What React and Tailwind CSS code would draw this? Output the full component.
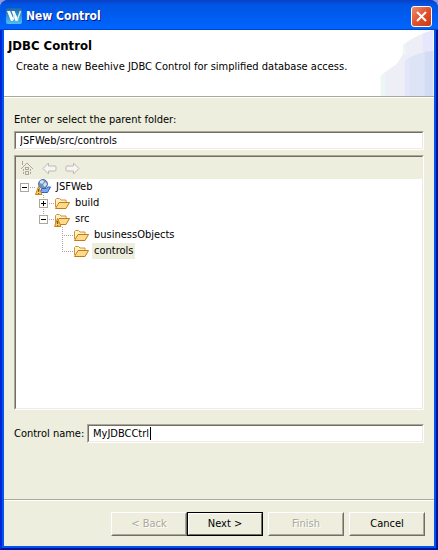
const sunken = "border border-t-[#aca899] border-l-[#aca899] border-r-white border-b-white";
const sunkenInner = "border border-t-[#716f64] border-l-[#716f64] border-r-[#f1e9e2] border-b-[#f1e9e2]";

const tree = {
	name: "JSFWeb",
	icon: "project",
	toggle: "minus",
	children: [
		{ name: "build", icon: "folder", toggle: "plus" },
		{
			name: "src",
			icon: "source",
			toggle: "minus",
			children: [
				{ name: "businessObjects", icon: "folder" },
				{ name: "controls", icon: "folder", selected: true },
			],
		},
	],
};

const Logo = () => (
	<svg width="16" height="16" viewBox="0 0 16 16" aria-hidden="true">
		<defs>
			<linearGradient id="logo" x1="0" y1="0" x2="0" y2="1">
				<stop offset="0" stopColor="#1a68ad" />
				<stop offset="1" stopColor="#4fc0ee" />
			</linearGradient>
		</defs>
		<rect width="16" height="16" rx="2" fill="url(#logo)" />
		<path d="M1 3h3l3 7v3H5zM5.500 3h3l3 7v3H9.500z" fill="#fff" />
		<path d="M7 12L9 6M11 13l3.500-10" stroke="#d5ecf8" strokeWidth="1.500" />
	</svg>
);

const HeaderArt = () => (
	<svg width="54" height="67" viewBox="0 0 54 67" className="shrink-0 border-b border-[#aca899]" aria-hidden="true">
		<defs>
			<clipPath id="outer">
				<path d="M0 67V47Q9 39 16 35Q21 28 23 24V15Q36 5 54 0V67z" />
			</clipPath>
			<clipPath id="inner">
				<path d="M25 67V31Q38 22 54 21V67z" />
			</clipPath>
		</defs>
		<g clipPath="url(#outer)">
			<path d="M0 0h54v67H0z" fill="#eeeef7" />
			<path d="M0 40h5v27H0zM23 10h3v15h-3z" fill="#ecf6f4" />
			<path d="M43 0h11v67H43z" fill="#e6e6fd" />
		</g>
		<g clipPath="url(#inner)">
			<path d="M25 0h29v67H25z" fill="#dce4f5" />
			<path d="M25 0h5v67h-5z" fill="#e4e4fa" />
			<path d="M45 0h9v67h-9z" fill="#d2dcf5" />
		</g>
	</svg>
);

const HomeIcon = () => (
	<svg width="14" height="16" viewBox="0 0 14 16" shapeRendering="crispEdges" aria-hidden="true">
		<path
			d="M2 1h1v4H2zM6 3h2v1H6zM5 4h1v1H5zM8 4h1v1H8zM4 5h1v1H4zM9 5h1v1H9zM3 6h1v1H3zM10 6h1v1h-1zM2 7h1v1H2zM11 7h1v1h-1zM1 8h1v1H1zM12 8h1v1h-1zM3 9h1v2H3zM10 9h1v2h-1zM3 12h1v2H3zM10 12h1v2h-1zM5 7h4v3H5zM5 11h4v4H5z"
			fill="#aca899"
		/>
		<path d="M6 8h2v1H6zM6 12h2v2H6z" fill="#edeedd" />
	</svg>
);

const BackArrow = ({ className }) => (
	<svg width="15" height="13" viewBox="0 0 15 13" className={className} aria-hidden="true">
		<path d="M1 6.500L6.500 1v3H13a1 1 0 0 1 1 1v3a1 1 0 0 1-1 1H6.500v3z" fill="#f6f5f2" stroke="#bdb9b4" strokeLinejoin="round" />
	</svg>
);

const Warning = () => (
	<g>
		<path d="M3.500 7.500L7 15.500H.5z" fill="#f9cf62" stroke="#c98220" strokeLinejoin="round" />
		<path d="M3.700 10v3M3.700 14v1" stroke="#6b4410" />
	</g>
);

const TreeIcon = ({ type }) => (
	<svg width="16" height="16" viewBox="0 0 16 16" className="shrink-0" aria-hidden="true">
		{type === "project" ? (
			<g>
				<circle cx="8" cy="5" r="4.500" fill="#6f93bd" stroke="#55779d" />
				<path d="M5 2l3-1 1 2-2 2-2-1zM10 3l2 2-2 3-2-2z" fill="#d3e3ee" />
				<path d="M5 13.500l2-4h4l2-1.500h2.500l-3 5.500z" fill="#79aaf3" stroke="#2f5fc4" strokeLinejoin="round" />
			</g>
		) : (
			<g>
				<path d="M1.500 12V4.500l1-1h3l1.500 1.500h5v3" fill="#fff3c4" stroke="#d0913a" />
				<path d="M1.500 13.500L5 7.500h10.500l-3.500 6z" fill="#fcdc8c" stroke="#c47a18" strokeLinejoin="round" />
			</g>
		)}
		{type !== "folder" && <Warning />}
	</svg>
);

// Dotted guide lines of one row, with the expand box on top
const Branch = ({ toggle, root, last }) => (
	<svg width="15" height="16" viewBox="0 0 15 16" className="shrink-0" shapeRendering="crispEdges" aria-hidden="true">
		<g stroke="#aca899" strokeDasharray="1 1">
			{!root && <path d={last ? "M4.500 0v8" : "M4.500 0v16"} />}
			<path d="M4 8.500h11" />
		</g>
		{toggle && (
			<g>
				<path d="M.5 4.500h8v8h-8z" fill="#fff" stroke="#aca899" />
				<path d={toggle === "plus" ? "M2 8.500h5M4.500 6v5" : "M2 8.500h5"} stroke="#000" />
			</g>
		)}
	</svg>
);

const TreeNode = ({ node, root, last }) => (
	<li>
		<div className="flex h-4 items-center">
			<Branch toggle={node.toggle} root={root} last={last} />
			<TreeIcon type={node.icon} />
			<span className={`ml-[3px] px-[2px] ${node.selected ? "bg-[#edeedd]" : ""}`}>{node.name}</span>
		</div>
		{node.children && (
			<ul className="pl-[19px]">
				{node.children.map((child, i) => (
					<TreeNode key={child.name} node={child} last={i === node.children.length - 1} />
				))}
			</ul>
		)}
	</li>
);

const DialogButton = ({ children, disabled, primary }) => (
	<button
		type="button"
		disabled={disabled}
		className={`h-6 w-19 border bg-[#edeedd] ${
			primary ? "border-black" : "border-t-white border-l-white border-r-[#716f64] border-b-[#716f64]"
		} ${disabled ? "text-[#aca899] [text-shadow:1px_1px_0_#fff]" : "text-black"}`}
	>
		<span
			className={`flex h-full items-center justify-center border ${
				primary
					? "border-t-white border-l-white border-r-[#716f64] border-b-[#716f64]"
					: "border-t-[#f1e9e2] border-l-[#f1e9e2] border-r-[#aca899] border-b-[#aca899]"
			}`}
		>
			{children}
		</span>
	</button>
);

export default function App() {
	return (
		<div className="flex min-h-screen flex-col bg-[#8f9bd8] font-['DejaVu_Sans_Condensed','DejaVu_Sans',sans-serif] text-[11px] leading-4 text-black">
			<main className="flex grow flex-col rounded-t-lg bg-[#0055ea]">
				<header className="flex h-[30px] items-center gap-1 rounded-t-lg bg-linear-to-b from-[#0a3fc4] via-[#0054e3] via-15% to-[#0066ff] px-[6px] pt-[2px] shadow-[inset_0_-1px_0_#0043cf]">
					<Logo />
					<h1 className="grow text-[12px] font-bold text-white [text-shadow:1px_1px_0_#0a1883]">New Control</h1>
					<button type="button" aria-label="Close" className="flex size-[21px] items-center justify-center rounded-[3px] border border-white bg-linear-to-br from-[#ee8a6c] via-[#e0512c] to-[#c93a10]">
						<svg width="13" height="13" viewBox="0 0 13 13" aria-hidden="true">
							<path d="M2 2l9 9M11 2l-9 9" stroke="#fff" strokeWidth="2" />
						</svg>
					</button>
				</header>

				<div className="flex grow flex-col border-r-2 border-b-2 border-l-2 border-r-[#00119c] border-b-[#00119c] border-l-[#0026d8]">
					<div className="flex grow flex-col border-x-2 border-b-2 border-[#0055ea] bg-[#edeedd]">
						<section className="flex h-[68px] justify-between border-b border-white bg-white">
							<div className="grow border-b border-[#aca899] pt-2 pl-1">
								<h2 className="text-[13px] font-bold">JDBC Control</h2>
								<p className="pt-[5px] pl-2 whitespace-nowrap">Create a new Beehive JDBC Control for simplified database access.</p>
							</div>
							<HeaderArt />
						</section>

						<form className="flex grow flex-col px-[10px] pt-[14px]">
							<label htmlFor="folder" className="pb-[3px]">Enter or select the parent folder:</label>
							<div className={sunken}>
								<input id="folder" defaultValue="JSFWeb/src/controls" className={`block h-[17px] w-full bg-white px-1 outline-none ${sunkenInner}`} />
							</div>
							<div className={`mt-[5px] flex grow flex-col ${sunken}`}>
								<div className={`flex grow flex-col bg-white ${sunkenInner}`}>
									<div className="flex h-[22px] items-center bg-[#edeedd] px-1">
										<button type="button" aria-label="Home" disabled>
											<HomeIcon />
										</button>
										<button type="button" aria-label="Back" disabled className="ml-2">
											<BackArrow />
										</button>
										<button type="button" aria-label="Forward" disabled className="ml-2">
											<BackArrow className="-scale-x-100" />
										</button>
									</div>
									<ul className="pl-1">
										<TreeNode node={tree} root last />
									</ul>
								</div>
							</div>
							<div className="flex items-center pt-[14px] pb-14">
								<label htmlFor="control" className="w-[73px] shrink-0 whitespace-nowrap">Control name:</label>
								<div className={`relative grow ${sunken}`}>
									<input id="control" defaultValue="MyJDBCCtrl" className={`block h-[17px] w-full bg-white px-1 caret-transparent outline-none ${sunkenInner}`} />
									<span className="absolute top-[2px] left-[62px] h-[13px] w-px bg-black" aria-hidden="true" />
								</div>
							</div>
						</form>

						<footer className="border-t border-[#aca899]">
							<div className="flex justify-end gap-[5px] border-t border-white px-[9px] pt-[11px] pb-[10px]">
								<div className="flex">
									<DialogButton disabled>&lt; Back</DialogButton>
									<DialogButton primary>Next &gt;</DialogButton>
								</div>
								<DialogButton disabled>Finish</DialogButton>
								<DialogButton>Cancel</DialogButton>
							</div>
						</footer>
					</div>
				</div>
			</main>
		</div>
	);
}
